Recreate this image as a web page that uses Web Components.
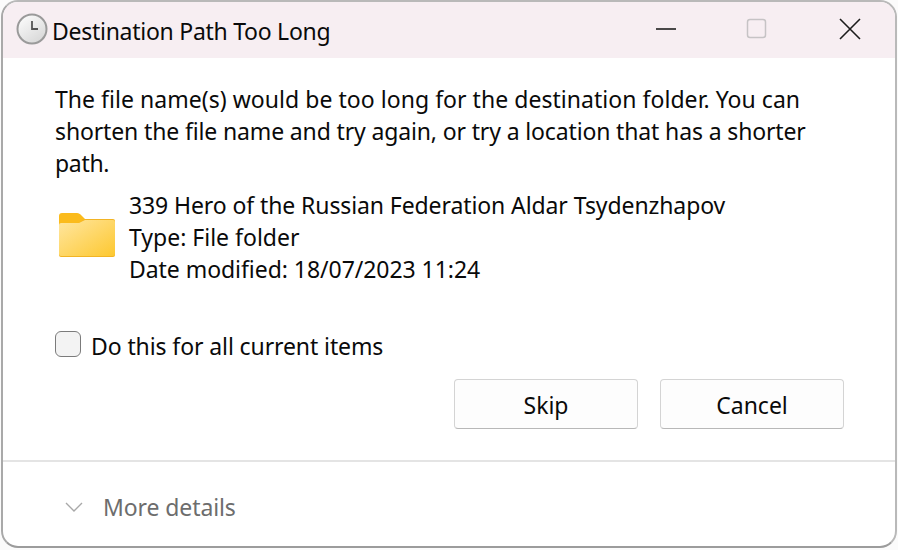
<!DOCTYPE html>
<html>
<head>
<meta charset="utf-8">
<title>Destination Path Too Long</title>
<style>
  html, body { margin: 0; height: 100%; background: #fbfbfb; }
  body { font-family: "Noto Sans", "Open Sans", sans-serif; color: #0a0a0a; overflow: hidden; }
</style>
</head>
<body>
<dialog-window>
  <span slot="title">Destination Path Too Long</span>
</dialog-window>

<script>
const TEXT_SIZE = "23px";

class TitleBar extends HTMLElement {
  constructor() {
    super();
    this.attachShadow({ mode: "open" });
    this.shadowRoot.innerHTML = `<style>
      :host { display: flex; align-items: center; height: 56px; background: #f7eef2; padding-left: 13px; }
      .clock { width: 32px; height: 32px; flex: none; margin-top: -3px; }
      .title { margin: 2px 0 0 4px; font-size: ${TEXT_SIZE}; letter-spacing: -.27px; line-height: 32px; flex: 1; }
      .btns { display: flex; align-items: center; padding-bottom: 2px; }
      .btn { display: flex; justify-content: center; }
    </style>
    <svg class="clock" viewBox="0 0 32 32">
      <defs><linearGradient id="c" x1="0" y1="0" x2="0.7" y2="1"><stop offset="0" stop-color="#fff"/><stop offset="1" stop-color="#d8d8d8"/></linearGradient></defs>
      <circle cx="16" cy="16" r="14.5" fill="url(#c)" stroke="#9a9a9a" stroke-width="2"/>
      <path d="M16 8V16H22" fill="none" stroke="#555" stroke-width="1.8"/>
    </svg>
    <div class="title"><slot name="title"></slot></div>
    <div class="btns">
      <div class="btn" style="width:86px"><svg width="22" height="22" viewBox="0 0 22 22"><path d="M1 11H21" stroke="#111" stroke-width="1.5"/></svg></div>
      <div class="btn" style="width:96px"><svg width="22" height="22" viewBox="0 0 22 22"><rect x="1.5" y="1.5" width="18" height="18" rx="2.5" fill="none" stroke="#c6c3c5" stroke-width="1.5"/></svg></div>
      <div class="btn" style="width:90px"><svg width="22" height="22" viewBox="0 0 22 22"><path d="M1 1L21 21M21 1L1 21" stroke="#1c1c1c" stroke-width="1.6"/></svg></div>
    </div>`;
  }
}
customElements.define("title-bar", TitleBar);

class FileInfo extends HTMLElement {
  constructor() {
    super();
    this.attachShadow({ mode: "open" });
    this.shadowRoot.innerHTML = `<style>
      :host { display: flex; margin-top: 10px; padding-left: 4px; font-size: ${TEXT_SIZE}; line-height: 32px; }
      svg { width: 56px; height: 44px; margin-top: 24px; margin-right: 14px; flex: none; }
    </style>
    <svg viewBox="0 0 56 44">
      <defs><linearGradient id="f" x1="0" y1="0" x2="1" y2="1"><stop offset="0" stop-color="#ffe6a0"/><stop offset="1" stop-color="#fdc830"/></linearGradient></defs>
      <path d="M0 3a3 3 0 0 1 3-3h15c2 0 3 1 4 2l5 5v4H0z" fill="#fbbb1c"/>
      <path d="M0 12a2 2 0 0 1 2-2h18l6-4h28a2 2 0 0 1 2 2v34a2 2 0 0 1-2 2H2a2 2 0 0 1-2-2z" fill="#f2b424"/>
      <path d="M0 12a2 2 0 0 1 2-2h18l6-3h28a2 2 0 0 1 2 2v32a2 2 0 0 1-2 2H2a2 2 0 0 1-2-2z" fill="url(#f)"/>
    </svg>
    <div><slot></slot></div>`;
  }
}
customElements.define("file-info", FileInfo);

class CheckRow extends HTMLElement {
  constructor() {
    super();
    this.attachShadow({ mode: "open" });
    this.shadowRoot.innerHTML = `<style>
      :host { display: flex; align-items: center; margin-top: 45px; font-size: ${TEXT_SIZE}; letter-spacing: -.1px; line-height: 32px; }
      .box { width: 26px; height: 26px; box-sizing: border-box; border: 1.5px solid #7b7b7b; border-radius: 6px; background: #f3f3f3; margin: -4px 10px 0 0; flex: none; }
    </style>
    <div class="box"></div><slot></slot>`;
  }
}
customElements.define("check-row", CheckRow);

class PushButton extends HTMLElement {
  constructor() {
    super();
    this.attachShadow({ mode: "open" });
    this.shadowRoot.innerHTML = `<style>
      :host { display: flex; align-items: center; justify-content: center; box-sizing: border-box; width: 184px; height: 50px; padding-top: 2px; border: 1px solid #d4d4d4; border-bottom-color: #b8b8b8; border-radius: 4px; background: #fdfdfd; font-size: ${TEXT_SIZE}; }
    </style><slot></slot>`;
  }
}
customElements.define("push-button", PushButton);

class MoreDetails extends HTMLElement {
  constructor() {
    super();
    this.attachShadow({ mode: "open" });
    this.shadowRoot.innerHTML = `<style>
      :host { display: flex; align-items: center; height: 86px; box-sizing: border-box; border-top: 2px solid #e4e4e4; padding: 6px 0 0 62px; font-size: ${TEXT_SIZE}; letter-spacing: -.1px; color: #6d6d6d; }
      svg { width: 18px; height: 10px; margin: -1px 20px 0 0; }
    </style>
    <svg viewBox="0 0 18 10"><path d="M1 1L9 9L17 1" fill="none" stroke="#a8a8a8" stroke-width="1.4"/></svg>
    <slot></slot>`;
  }
}
customElements.define("more-details", MoreDetails);

class DialogWindow extends HTMLElement {
  constructor() {
    super();
    this.attachShadow({ mode: "open" });
    this.shadowRoot.innerHTML = `<style>
      :host { display: flex; flex-direction: column; box-sizing: border-box; width: 896px; height: 548px; margin-left: 1px; background: #fff; border: 2px solid #b9b9b9; border-left-color: #a9a9a9; border-bottom-color: #9c9c9c; border-radius: 17px; overflow: hidden; }
      .body { flex: 1; padding: 25px 51px 0 52px; font-size: ${TEXT_SIZE}; line-height: 32px; }
      .actions { display: flex; justify-content: flex-end; gap: 22px; margin-top: 17px; }
      p { margin: 0; }
      span { display: block; white-space: nowrap; }
    </style>
    <title-bar><slot name="title" slot="title"></slot></title-bar>
    <div class="body">
      <p>
        <span style="letter-spacing:.04px">The file name(s) would be too long for the destination folder. You can</span>
        <span style="letter-spacing:-.14px">shorten the file name and try again, or try a location that has a shorter</span>
        <span style="letter-spacing:-.3px">path.</span>
      </p>
      <file-info>
        <span style="letter-spacing:-.1px">339 Hero of the Russian Federation Aldar Tsydenzhapov</span>
        <span>Type: File folder</span>
        <span style="letter-spacing:-.05px">Date modified: 18/07/2023 11:24</span>
      </file-info>
      <check-row>Do this for all current items</check-row>
      <div class="actions"><push-button>Skip</push-button><push-button>Cancel</push-button></div>
    </div>
    <more-details>More details</more-details>`;
  }
}
customElements.define("dialog-window", DialogWindow);
</script>
</body>
</html>
